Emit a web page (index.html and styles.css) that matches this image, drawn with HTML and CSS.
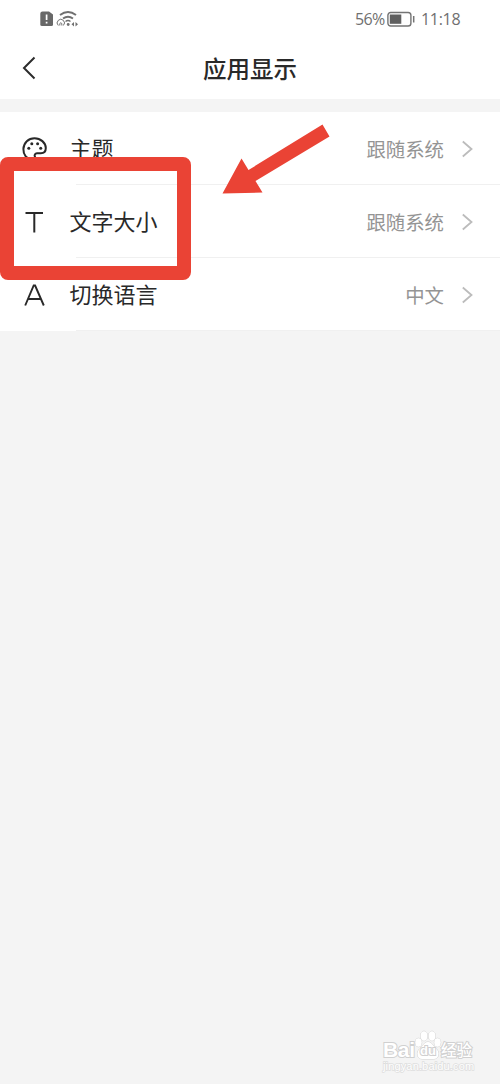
FILE: index.html
```html
<!DOCTYPE html>
<html lang="zh-CN">
<head>
<meta charset="utf-8">
<title>应用显示</title>
<link rel="stylesheet" href="styles.css">
</head>
<body>
<div class="screen">
  <div class="statusbar">
    <svg class="status-icons" width="40" height="18" viewBox="0 0 40 18">
      <path d="M2.500 1.500H9l4 3v10q0 1.500-1.500 1.500h-9.500Q0.300 16 0.300 14.500v-11Q0.300 1.500 2.500 1.500z" fill="#686868"/>
      <path d="M6.600 4.500v5.500M6.600 11.800v1.700" stroke="#fff" stroke-width="1.700"/>
      <g fill="none" stroke="#707070" stroke-width="1.500">
        <path d="M20 5q8-6 16 0M23 8.500q5-3.500 10 0" stroke-width="1.900"/>
        <path d="M25.500 11.500q2.500-1.800 5 0" stroke-width="1.500"/>
        <path d="M18.300 15.500a3.600 3.600 0 1 1 5 0M19.800 15.500v-2q1-1.500 2 0v2" stroke-width="1"/>
      </g>
      <circle cx="28.200" cy="14.500" r="1.400" fill="#707070"/>
      <path d="M34 12v4.500l-2.500-2.250zM35.500 12v4.500l2.500-2.250z" fill="#707070"/>
    </svg>
    <div class="status-right">
      <span class="percent">56%</span>
      <svg width="28" height="17" viewBox="0 0 28 17">
        <rect x="0.900" y="1.500" width="23" height="13.500" rx="2.800" fill="none" stroke="#747474" stroke-width="1.400"/>
        <rect x="2.800" y="3.500" width="11.500" height="9.300" fill="#606060"/>
        <path d="M26.700 5v6.500" stroke="#747474" stroke-width="1.500"/>
      </svg>
      <span class="clock">11:18</span>
    </div>
  </div>
  <header class="header">
    <svg class="back" width="14" height="24" viewBox="0 0 14 24"><path d="M12.500 1.500L2 12l10.500 10.500" fill="none" stroke="#2c2c2c" stroke-width="2"/></svg>
    <h1 class="title">应用显示</h1>
  </header>
  <main class="list">
    <div class="row">
      <svg class="icon" width="26" height="26" viewBox="0 0 26 26">
        <path d="M12 24C5.500 23.500 2.200 18.500 2.400 13 2.700 6.500 7.500 2.200 13.500 2.200s11.300 4.500 11.300 9.900c0 3.700-2.500 5.200-5 5.200h-3.800c-2 0-3 2-2 3.600.700 1.500.300 3.100-2 3.100z" fill="none" stroke="#292929" stroke-width="2"/>
        <g fill="#292929"><circle cx="7.800" cy="12.200" r="1.500"/><circle cx="10.800" cy="7.700" r="1.500"/><circle cx="16.600" cy="7.700" r="1.500"/><circle cx="19.700" cy="12.200" r="1.500"/></g>
      </svg>
      <div class="row-main">
        <span class="label">主题</span><span class="value">跟随系统</span>
        <svg class="chevron" width="12" height="18" viewBox="0 0 12 18"><path d="M1.800 1.500L10.500 9l-8.700 7.500" fill="none" stroke="#bcbcbc" stroke-width="1.800"/></svg>
      </div>
    </div>
    <div class="row">
      <svg class="icon" width="26" height="26" viewBox="0 0 26 26"><path d="M4.500 4h17.500M13.300 4v19.500" fill="none" stroke="#292929" stroke-width="2"/></svg>
      <div class="row-main">
        <span class="label">文字大小</span><span class="value">跟随系统</span>
        <svg class="chevron" width="12" height="18" viewBox="0 0 12 18"><path d="M1.800 1.500L10.500 9l-8.700 7.500" fill="none" stroke="#bcbcbc" stroke-width="1.800"/></svg>
      </div>
    </div>
    <div class="row">
      <svg class="icon" width="26" height="26" viewBox="0 0 26 26"><path d="M4.200 23.500L12.700 3.500h1.400l8.700 20M7.300 17h12.400" fill="none" stroke="#292929" stroke-width="1.900"/></svg>
      <div class="row-main">
        <span class="label">切换语言</span><span class="value">中文</span>
        <svg class="chevron" width="12" height="18" viewBox="0 0 12 18"><path d="M1.800 1.500L10.500 9l-8.700 7.500" fill="none" stroke="#bcbcbc" stroke-width="1.800"/></svg>
      </div>
    </div>
  </main>
  <div class="highlight"></div>
  <svg class="arrow" width="110" height="72" viewBox="0 0 110 72"><path d="M2.500 69.500L21.500 34.500l7 11.500L102.500 0.500l7 12L35.500 57l7 11.500z" fill="#ea4335"/></svg>
  <div class="watermark">
    <div class="brand">
      <span class="bai">Bai</span>
      <span class="paw">
        <svg width="28" height="30" viewBox="0 0 28 30" fill="#fff" stroke="#d0d0d0" stroke-width="1">
          <ellipse cx="10" cy="6" rx="3.500" ry="4.800"/><ellipse cx="18" cy="6" rx="3.500" ry="4.800"/>
          <ellipse cx="4.500" cy="12.500" rx="3.200" ry="4.200"/><ellipse cx="23.500" cy="12.500" rx="3.200" ry="4.200"/>
          <path d="M14 12c4 0 5 4 8.500 7 3.500 3.500 2.500 10-3 10h-11c-5.500 0-6.500-6.500-3-10C9 16 10 12 14 12z"/>
        </svg>
        <span class="du">du</span>
      </span>
      <span class="jingyan">经验</span>
    </div>
    <div class="site">jingyan.baidu.com</div>
  </div>
</div>
</body>
</html>
```
FILE: styles.css
```css
* { box-sizing: border-box; }
body { margin: 0; }
.screen {
  position: relative;
  height: 1084px;
  overflow: hidden;
  background: #f4f4f4;
  color: #292929;
  font-family: "Noto Sans CJK SC", sans-serif;
}
.statusbar {
  display: flex;
  justify-content: space-between;
  align-items: center;
  height: 38px;
  padding: 0 40px;
  background: #fff;
}
.status-right {
  display: flex;
  align-items: center;
  color: #707070;
  font: 16px/20px "Open Sans", sans-serif;
}
.percent { width: 32px; letter-spacing: -0.6px; }
.clock { width: 39px; margin-left: 6px; letter-spacing: -0.3px; }
.header {
  display: grid;
  grid-template-columns: 60px 1fr 60px;
  align-items: center;
  height: 61px;
  padding-bottom: 2px;
  background: #fff;
}
.back { margin-left: 22px; }
.title {
  margin: 0;
  text-align: center;
  font-size: 23.5px;
  line-height: 34px;
  font-weight: 500;
}
.list { margin-top: 13px; background: #fff; }
.row { display: flex; align-items: center; height: 73px; }
.icon { flex: none; margin: 0 22px 0 21px; }
.row-main {
  display: flex;
  flex: 1;
  align-items: center;
  height: 100%;
  padding: 0 27px 0 0;
  background: linear-gradient(#f0f0f0, #f0f0f0) 7px 100% / 100% 1px no-repeat;
}
.label { padding-bottom: 3px; font-size: 22px; line-height: 32px; text-indent: 0.6px; }
.value { margin-left: auto; color: #949494; font-size: 19.4px; line-height: 28px; }
.chevron { margin-left: 17px; }
.highlight {
  position: absolute;
  left: 0;
  top: 157px;
  width: 191px;
  height: 123px;
  border: 14px solid #ea4335;
  border-radius: 8px;
}
.arrow { position: absolute; left: 220px; top: 124px; }
.watermark {
  position: absolute;
  left: 383px;
  top: 1029px;
  width: 92px;
  color: #fff;
  -webkit-text-stroke: 2px #d0d0d0;
  paint-order: stroke fill;
}
.brand { display: flex; align-items: flex-end; height: 31px; }
.bai { width: 31px; font: bold 21px/20px "Liberation Sans", sans-serif; letter-spacing: -0.3px; }
.paw { position: relative; width: 27px; height: 30px; }
.du {
  position: absolute;
  left: 6px;
  top: 14px;
  font: bold 13px/14px "Liberation Sans", sans-serif;
}
.jingyan { font-size: 15.5px; line-height: 22px; font-weight: 500; white-space: nowrap; }
.site { font: 11px/13px "Liberation Sans", sans-serif; letter-spacing: 0.15px; -webkit-text-stroke: 1.500px #dedede; }
```
